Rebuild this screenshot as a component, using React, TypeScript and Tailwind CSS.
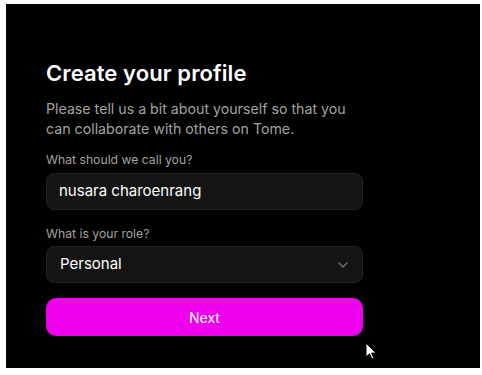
export default function App() {
  return (
    <div className="w-[482px] h-[375px] bg-white pl-[6px] pt-[4px]" style={{ fontFamily: "Inter, 'Liberation Sans', sans-serif" }}>
      <div className="relative w-[474px] h-[364px] bg-black pl-[40px] pt-[55px]">
        <div className="w-[317px] flex flex-col">
          <h1 className="text-[22px] leading-[28px] font-semibold text-white tracking-[0.1px]">Create your profile</h1>
          <p className="mt-[12px] text-[14.2px] leading-[20px] text-[#a3a3a3]">
            Please tell us a bit about yourself so that you can collaborate with others on Tome.
          </p>
          <label className="mt-[13px] text-[12.2px] leading-[16px] text-[#a3a3a3]">What should we call you?</label>
          <div className="mt-[5px] h-[37px] rounded-[8px] bg-[#141414] border border-[#232323] flex items-center px-[12px] text-[15px] text-white">
            nusara charoenrang
          </div>
          <label className="mt-[16px] text-[12.2px] leading-[16px] text-[#a3a3a3]">What is your role?</label>
          <div className="mt-[4px] h-[37px] rounded-[8px] bg-[#141414] border border-[#232323] flex items-center justify-between pl-[13px] pr-[13px] text-[15px] text-white">
            <span>Personal</span>
            <svg width="12" height="8" viewBox="0 0 12 8" fill="none">
              <path d="M2 2l4 4 4-4" stroke="#6b6b6b" strokeWidth="1.6" strokeLinecap="round" strokeLinejoin="round" />
            </svg>
          </div>
          <button className="mt-[15px] h-[38px] rounded-[10px] bg-[#ee00ee] text-white text-[14px] flex items-center justify-center">
            Next
          </button>
        </div>
        <svg className="absolute left-[359px] top-[338px]" width="12" height="18" viewBox="0 0 12 18">
          <path d="M1 1v14l3.5-3.2 2.3 5 2-0.9-2.2-4.8H11z" fill="white" stroke="black" strokeWidth="1" />
        </svg>
      </div>
    </div>
  );
}
